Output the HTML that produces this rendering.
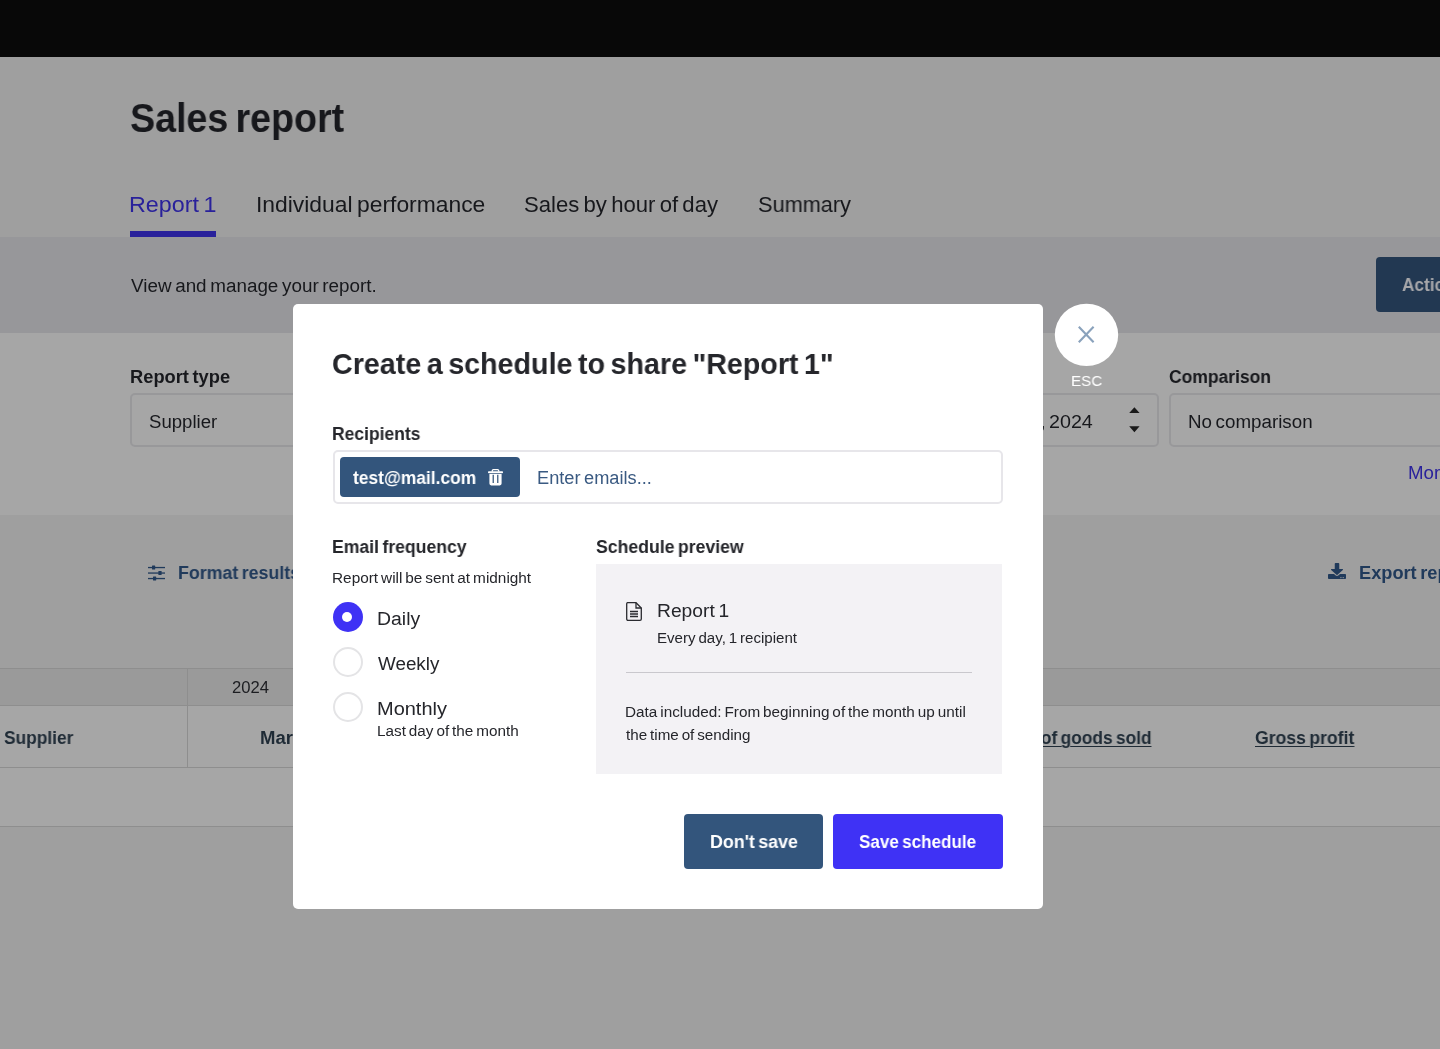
<!DOCTYPE html>
<html lang="en"><head><meta charset="utf-8"><title>Sales report</title>
<style>
*{box-sizing:border-box;margin:0;padding:0}
html,body{width:1440px;height:1049px;overflow:hidden;background:#9f9f9f;font-family:"Liberation Sans",sans-serif}
.abs,.t{position:absolute}
.t{white-space:nowrap;word-spacing:-0.085em;display:block;transform-origin:0 50%;will-change:transform}
svg{position:absolute;display:block;overflow:visible}
#topbar{left:0;top:0;width:1440px;height:57px;background:#080808}
#band{left:0;top:237px;width:1440px;height:96px;background:#97979a}
#filters{left:0;top:333px;width:1440px;height:182px;background:#a6a6a6}
#tabline{left:130px;top:231px;width:86px;height:6px;background:#29219b}
#btn-actions{left:1376px;top:257px;width:120px;height:55px;border-radius:4px;background:#223852}
.sel{height:54px;top:393px;border:2px solid #98989a;border-radius:5px;background:#a6a6a6}
#sel1{left:130px;width:400px}
#sel2{left:760px;width:399px}
#sel3{left:1169px;width:400px}
#th1{left:0;top:668px;width:1440px;height:37px;background:#9a9a9a}
#tr2{left:0;top:705px;width:1440px;height:121px;background:#a6a6a6}
.hl{left:0;width:1440px;height:1px;background:#8e8e8e}
#vl{left:187px;top:668px;width:1px;height:99px;background:#8e8e8e}
#modal{left:293px;top:304px;width:750px;height:605px;background:#fff;border-radius:5px}
#closebtn{left:1055px;top:304px;width:63px;height:63px;border-radius:50%;background:#fff}
#recip{left:333px;top:450px;width:670px;height:54px;border:2px solid #e7e6ea;border-radius:5px;background:#fff}
#chip{left:340px;top:457px;width:180px;height:40px;border-radius:4px;background:#33557c}
.radio{width:30px;height:30px;border-radius:50%;left:333px;border:2px solid #e4e4e6;background:#fff}
#r1{top:602px;border:0;background:#3f32f5}
#r1dot{left:341.7px;top:611.7px;width:10.5px;height:10.5px;border-radius:50%;background:#fff}
#r2{top:647px}
#r3{top:692px}
#preview{left:596px;top:564px;width:406px;height:210px;background:#f3f2f5}
#phr{left:626px;top:672px;width:346px;height:1px;background:#c9c8cd}
#btn-dont{left:684px;top:814px;width:139px;height:55px;border-radius:4px;background:#33557c}
#btn-save{left:833px;top:814px;width:170px;height:55px;border-radius:4px;background:#3f32f5}

#t_title{left:129.69px;top:98px;font-size:40px;line-height:40px;font-weight:700;color:#17181c;transform:scaleX(0.9401);}
#t_tab1{left:129.23px;top:194px;font-size:22px;line-height:22px;font-weight:400;color:#29219b;transform:scaleX(1.0588);}
#t_tab2{left:255.52px;top:194px;font-size:22px;line-height:22px;font-weight:400;color:#17181c;transform:scaleX(1.0391);}
#t_tab3{left:524.32px;top:194px;font-size:22px;line-height:22px;font-weight:400;color:#17181c;transform:scaleX(1.0046);}
#t_tab4{left:758.34px;top:194px;font-size:22px;line-height:22px;font-weight:400;color:#17181c;transform:scaleX(0.9880);}
#t_view{left:130.76px;top:277px;font-size:18px;line-height:18px;font-weight:400;color:#17181c;transform:scaleX(1.0472);}
#t_actions{left:1402.47px;top:276px;font-size:18px;line-height:18px;font-weight:700;color:#a7a7aa;transform:scaleX(0.9573);}
#t_rtype{left:129.79px;top:368px;font-size:18px;line-height:18px;font-weight:700;color:#17181c;transform:scaleX(1.0164);}
#t_supplier{left:149.36px;top:413px;font-size:18px;line-height:18px;font-weight:400;color:#17181c;transform:scaleX(1.0320);}
#t_2024{left:1048.69px;top:413px;font-size:18px;line-height:18px;font-weight:400;color:#17181c;transform:scaleX(1.0943);}
#t_comma{left:1039.16px;top:413px;font-size:18px;line-height:18px;font-weight:400;color:#17181c;transform:scaleX(1.4508);}
#t_comp{left:1169.18px;top:368px;font-size:18px;line-height:18px;font-weight:700;color:#17181c;transform:scaleX(0.9713);}
#t_nocomp{left:1188.03px;top:413px;font-size:18px;line-height:18px;font-weight:400;color:#17181c;transform:scaleX(1.0424);}
#t_more{left:1408.04px;top:464px;font-size:18px;line-height:18px;font-weight:400;color:#29219b;transform:scaleX(1.0360);}
#t_format{left:177.73px;top:564px;font-size:18px;line-height:18px;font-weight:700;color:#203a5b;transform:scaleX(0.9880);}
#t_export{left:1359.00px;top:564px;font-size:18px;line-height:18px;font-weight:700;color:#203a5b;transform:scaleX(1.0114);}
#t_y2024{left:232.10px;top:680px;font-size:16px;line-height:16px;font-weight:400;color:#1c1d21;transform:scaleX(1.0390);}
#t_thsup{left:3.61px;top:729px;font-size:18px;line-height:18px;font-weight:700;color:#1f2b36;transform:scaleX(0.9633);}
#t_thmar{left:259.68px;top:729px;font-size:18px;line-height:18px;font-weight:700;color:#1f2b36;transform:scaleX(1.0297);}
#t_cogs{left:998.58px;top:729px;font-size:18px;line-height:18px;font-weight:700;color:#1f2b36;transform:scaleX(0.9627);text-decoration:underline;text-underline-offset:2px;text-decoration-thickness:1.2px;}
#t_gp{left:1255.37px;top:729px;font-size:18px;line-height:18px;font-weight:700;color:#1f2b36;transform:scaleX(0.9784);text-decoration:underline;text-underline-offset:2px;text-decoration-thickness:1.2px;}
#t_esc{left:1070.50px;top:373px;font-size:15.5px;line-height:15.5px;font-weight:400;color:#ffffff;transform:scaleX(0.9792);}
#m_title{left:332.23px;top:349px;font-size:30px;line-height:30px;font-weight:700;color:#25262b;transform:scaleX(0.9553);}
#m_recip{left:332.45px;top:425px;font-size:18px;line-height:18px;font-weight:700;color:#25262b;transform:scaleX(0.9715);}
#m_chip{left:352.82px;top:469px;font-size:18px;line-height:18px;font-weight:700;color:#ffffff;transform:scaleX(0.9660);}
#m_enter{left:537.08px;top:469px;font-size:18px;line-height:18px;font-weight:400;color:#3a5a82;transform:scaleX(1.0118);}
#m_freq{left:332.44px;top:538px;font-size:18px;line-height:18px;font-weight:700;color:#25262b;transform:scaleX(0.9789);}
#m_sent{left:332.33px;top:571px;font-size:14px;line-height:14px;font-weight:400;color:#25262b;transform:scaleX(1.0966);}
#m_daily{left:376.68px;top:610px;font-size:18px;line-height:18px;font-weight:400;color:#25262b;transform:scaleX(1.0784);}
#m_weekly{left:378.00px;top:655px;font-size:18px;line-height:18px;font-weight:400;color:#25262b;transform:scaleX(1.0459);}
#m_monthly{left:376.63px;top:700px;font-size:18px;line-height:18px;font-weight:400;color:#25262b;transform:scaleX(1.1093);}
#m_last{left:376.94px;top:724px;font-size:14px;line-height:14px;font-weight:400;color:#25262b;transform:scaleX(1.0910);}
#m_prev{left:595.84px;top:538px;font-size:18px;line-height:18px;font-weight:700;color:#25262b;transform:scaleX(0.9811);}
#m_rep1{left:656.99px;top:602px;font-size:18px;line-height:18px;font-weight:400;color:#25262b;transform:scaleX(1.0692);}
#m_every{left:656.76px;top:631px;font-size:14px;line-height:14px;font-weight:400;color:#25262b;transform:scaleX(1.0770);}
#m_data1{left:624.94px;top:705px;font-size:14px;line-height:14px;font-weight:400;color:#25262b;transform:scaleX(1.0926);}
#m_data2{left:625.99px;top:728px;font-size:14px;line-height:14px;font-weight:400;color:#25262b;transform:scaleX(1.0850);}
#m_dont{left:709.63px;top:833px;font-size:18px;line-height:18px;font-weight:700;color:#ffffff;transform:scaleX(0.9905);}
#m_save{left:859.27px;top:833px;font-size:18px;line-height:18px;font-weight:700;color:#ffffff;transform:scaleX(0.9483);}
</style></head>
<body>
<div id="page">
  <div class="abs" id="topbar"></div>
  <div class="abs" id="band"></div>
  <div class="abs" id="filters"></div>
  <div class="abs" id="tabline"></div>
  <div class="abs" id="btn-actions"></div>
  <div class="abs sel" id="sel1"></div>
  <div class="abs sel" id="sel2"></div>
  <div class="abs sel" id="sel3"></div>
  <svg id="selarrows" style="left:1129px;top:407px" width="11" height="26" viewBox="0 0 11 26"><path d="M0.2 6 L5.4 0.2 L10.6 6 Z M0.2 19.2 L5.4 25.2 L10.6 19.200 Z" fill="#1a1a1a"/></svg>
  <div class="abs" id="th1"></div>
  <div class="abs" id="tr2"></div>
  <div class="abs hl" style="top:668px"></div>
  <div class="abs hl" style="top:705px"></div>
  <div class="abs hl" style="top:767px"></div>
  <div class="abs hl" style="top:826px"></div>
  <div class="abs" id="vl"></div>
  <!-- sliders icon -->
  <svg id="ic-sliders" style="left:148px;top:565px" width="17" height="16" viewBox="0 0 17 16">
    <g fill="#203a5b">
      <rect x="0" y="1.9" width="17" height="1.3"/><rect x="4" y="0.6" width="3.2" height="3.9" rx="0.5"/>
      <rect x="0" y="7.4" width="17" height="1.3"/><rect x="10.4" y="6.1" width="3.2" height="3.9" rx="0.5"/>
      <rect x="0" y="12.9" width="17" height="1.3"/><rect x="5" y="11.6" width="3.2" height="3.9" rx="0.5"/>
    </g>
  </svg>
  <!-- download icon -->
  <svg id="ic-download" style="left:1328px;top:563px" width="18" height="16" viewBox="0 0 512 512" preserveAspectRatio="none"><path fill="#203a5b" d="M216 0h80c13.3 0 24 10.7 24 24v168h87.7c17.8 0 26.7 21.5 14.100 34.100L269.700 378.300c-7.500 7.500-19.800 7.500-27.300 0L90.100 226.100c-12.600-12.600-3.700-34.100 14.100-34.100H192V24c0-13.300 10.700-24 24-24zm296 376v112c0 13.300-10.700 24-24 24H24c-13.300 0-24-10.700-24-24V376c0-13.300 10.700-24 24-24h146.700l49 49c20.100 20.100 52.500 20.100 72.600 0l49-49H488c13.300 0 24 10.700 24 24zm-124 88c0-11-9-20-20-20s-20 9-20 20 9 20 20 20 20-9 20-20zm64 0c0-11-9-20-20-20s-20 9-20 20 9 20 20 20 20-9 20-20z"/></svg>
<span class="t" id="t_title">Sales report</span>
<span class="t" id="t_tab1">Report 1</span>
<span class="t" id="t_tab2">Individual performance</span>
<span class="t" id="t_tab3">Sales by hour of day</span>
<span class="t" id="t_tab4">Summary</span>
<span class="t" id="t_view">View and manage your report.</span>
<span class="t" id="t_actions">Actions</span>
<span class="t" id="t_rtype">Report type</span>
<span class="t" id="t_supplier">Supplier</span>
<span class="t" id="t_2024">2024</span>
<span class="t" id="t_comma">,</span>
<span class="t" id="t_comp">Comparison</span>
<span class="t" id="t_nocomp">No comparison</span>
<span class="t" id="t_more">More filters</span>
<span class="t" id="t_format">Format results</span>
<span class="t" id="t_export">Export report</span>
<span class="t" id="t_y2024">2024</span>
<span class="t" id="t_thsup">Supplier</span>
<span class="t" id="t_thmar">Mar</span>
<span class="t" id="t_cogs">Cost of goods sold</span>
<span class="t" id="t_gp">Gross profit</span>
</div>
<div id="overlay">
  <svg id="ic-close" style="left:0;top:0" width="1440" height="400" viewBox="0 0 1440 400">
    <ellipse cx="1086.5" cy="334.85" rx="31.7" ry="31.15" fill="#fff"/>
    <path d="M1078.800 326.700 L1093.600 342.300 M1093.600 326.700 L1078.800 342.300" stroke="#8aa2bc" stroke-width="2.100" fill="none"/>
  </svg>
<span class="t" id="t_esc">ESC</span>
  <div class="abs" id="modal"></div>
  <div class="abs" id="recip"></div>
  <div class="abs" id="chip"></div>
  <svg id="ic-trash" style="left:487.6px;top:469.3px" width="15" height="16.5" viewBox="0 0 15 16.5">
    <path d="M4.3 2.8 V1.7 a1.1 1.1 0 0 1 1.1 -1.1 h4.2 a1.1 1.1 0 0 1 1.1 1.1 V2.8" fill="none" stroke="#fff" stroke-width="1.3"/>
    <rect x="0" y="2.2" width="15" height="2" rx="0.8" fill="#fff"/>
    <path fill-rule="evenodd" fill="#fff" d="M1.4 4.9 H13.6 V14.6 a1.8 1.8 0 0 1 -1.8 1.8 H3.2 a1.8 1.8 0 0 1 -1.8 -1.8 Z M4.6 5.7 h1.25 v8.2 h-1.25 Z M9.15 5.7 h1.25 v8.2 h-1.25 Z"/>
  </svg>
  <div class="abs radio" id="r1"></div><div class="abs" id="r1dot"></div>
  <div class="abs radio" id="r2"></div>
  <div class="abs radio" id="r3"></div>
  <div class="abs" id="preview"></div>
  <div class="abs" id="phr"></div>
  <svg id="ic-file" style="left:626px;top:602px" width="16" height="19" viewBox="0 0 16 19">
    <path d="M1.5 0.7 H10 L15.3 6 V17 a1.3 1.3 0 0 1 -1.300 1.300 H2 a1.300 1.300 0 0 1 -1.300 -1.300 V2 a1.300 1.300 0 0 1 0.800 -1.300 Z" fill="none" stroke="#2a2b30" stroke-width="1.300"/>
    <path d="M10 0.7 V6 H15.300" fill="none" stroke="#2a2b30" stroke-width="1.300"/>
    <path d="M4 9.500 H12 M4 12 H12 M4 14.500 H12" stroke="#2a2b30" stroke-width="1.300"/>
  </svg>
  <div class="abs" id="btn-dont"></div>
  <div class="abs" id="btn-save"></div>
<span class="t" id="m_title">Create a schedule to share &quot;Report 1&quot;</span>
<span class="t" id="m_recip">Recipients</span>
<span class="t" id="m_chip">test@mail.com</span>
<span class="t" id="m_enter">Enter emails...</span>
<span class="t" id="m_freq">Email frequency</span>
<span class="t" id="m_sent">Report will be sent at midnight</span>
<span class="t" id="m_daily">Daily</span>
<span class="t" id="m_weekly">Weekly</span>
<span class="t" id="m_monthly">Monthly</span>
<span class="t" id="m_last">Last day of the month</span>
<span class="t" id="m_prev">Schedule preview</span>
<span class="t" id="m_rep1">Report 1</span>
<span class="t" id="m_every">Every day, 1 recipient</span>
<span class="t" id="m_data1">Data included: From beginning of the month up until</span>
<span class="t" id="m_data2">the time of sending</span>
<span class="t" id="m_dont">Don't save</span>
<span class="t" id="m_save">Save schedule</span>
</div>

</body></html>
